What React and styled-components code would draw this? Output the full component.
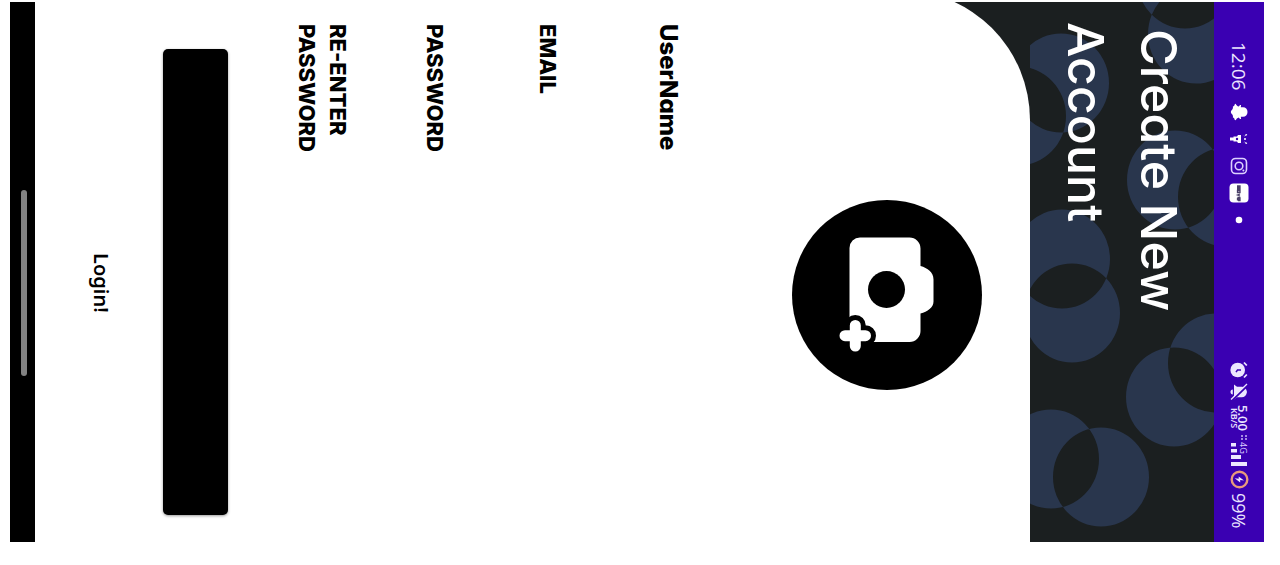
import React from "react";
import styled, { createGlobalStyle } from "styled-components";

const GlobalStyle = createGlobalStyle`
  * { box-sizing: border-box; }
  body { margin: 0; background: #fff; font-family: Inter, "Liberation Sans", sans-serif; }
  button, input { font: inherit; border: 0; padding: 0; }
`;

/* The phone lies on its side: the block axis runs from right to left. */
const Page = styled.div`
  writing-mode: vertical-rl;
  width: 100%;
  height: 100vh;
  min-height: 540px;
  padding-block: 16px 10px;
  padding-inline: 2px 23px;
  background: #fff;
`;

const Screen = styled.div`
  display: flex;
  flex-direction: column;
  width: 100%;
  height: 100%;
  overflow: hidden;
  background: #1b1f20;
`;

const StatusBar = styled.div`
  display: flex;
  flex: none;
  justify-content: space-between;
  align-items: center;
  block-size: 50px;
  padding-inline: 40px 14px;
  background: #3a00b2;
  color: #ece6ff;
  font-family: "Open Sans", sans-serif;
`;

const StatusGroup = styled.div`
  display: flex;
  align-items: center;
  gap: ${(p) => p.$gap}px;
`;

const StatusText = styled.span`
  min-inline-size: ${(p) => p.$min || 0}px;
  font-size: ${(p) => p.$size}px;
  line-height: 24px;
  font-weight: 500;
`;

const Speed = styled.span`
  display: flex;
  flex-direction: column;
  align-items: center;
  font-size: 13px;
  line-height: 10px;
  font-weight: 600;
`;

const SpeedUnit = styled.span`
  font-size: 9px;
  line-height: 8px;
`;

const Upright = styled.svg`
  display: block;
  flex: none;
  overflow: visible;
  writing-mode: horizontal-tb;
`;

const Header = styled.header`
  position: relative;
  flex: none;
  padding-block: 19px;
  padding-inline-start: 20px;
`;

const Pattern = styled.svg`
  position: absolute;
  inset: 0;
  width: 100%;
  height: 100%;
`;

const Title = styled.h1`
  position: relative;
  margin: 0;
  max-inline-size: 320px;
  color: #fff;
  font-size: 50px;
  line-height: 73px;
  font-weight: 500;
  text-indent: 7px;
  font-feature-settings: "cv11";
`;

const Sheet = styled.main`
  flex: 1;
  margin-inline-start: -12px;
  padding-inline: 34px 0;
  padding-block-start: 48px;
  border-start-start-radius: 130px;
  background: #fff;
  color: #000;
`;

const Form = styled.form`
  display: flex;
  flex-direction: column;
  align-items: stretch;
  height: 100%;
`;

const PhotoButton = styled.button`
  align-self: center;
  display: block;
  width: 190px;
  height: 190px;
  margin-inline-start: 24px;
  margin-block-end: 108px;
  border-radius: 50%;
  background: #000;
`;

const Field = styled.div`
  display: flex;
  align-items: stretch;
  margin-block-end: ${(p) => p.$after}px;
`;

const Label = styled.label`
  flex: none;
  inline-size: 148px;
  font-size: ${(p) => p.$size || 22}px;
  line-height: 31px;
  font-weight: 800;
  font-feature-settings: "cv11";
`;

const Input = styled.input`
  flex: 1;
  min-inline-size: 0;
  background: transparent;
  outline: none;
  font-size: 22px;
`;

const Submit = styled.button`
  flex: none;
  block-size: 65px;
  margin-inline: 25px 27px;
  border-radius: 5px;
  background: #000;
  box-shadow: 0 1px 3px rgba(0, 0, 0, 0.4);
`;

const LoginLink = styled.a`
  align-self: center;
  margin-block-start: 47px;
  color: #000;
  font-family: "Noto Sans", sans-serif;
  font-size: 20px;
  line-height: 30px;
  font-weight: 600;
  text-decoration: none;
`;

const NavBar = styled.nav`
  display: flex;
  flex: none;
  justify-content: center;
  align-items: center;
  block-size: 25px;
  padding-inline-start: 22px;
  padding-block-end: 3px;
  background: #000;
`;

const NavHandle = styled.span`
  block-size: 6px;
  inline-size: 186px;
  border-radius: 3px;
  background: #828282;
`;

/* Draws an upright w by h glyph turned a quarter clockwise. */
function Glyph({ w = 18, h = 18, children }) {
  return (
    <Upright width={h} height={w} viewBox={`0 0 ${h} ${w}`} aria-hidden="true">
      <g transform={`translate(${h} 0) rotate(90)`}>{children}</g>
    </Upright>
  );
}

const Ghost = () => (
  <Glyph>
    <path
      fill="#fff"
      d="M9 0.500c3 0 4.700 1.900 4.700 4.500v2.200l2-.3c.6.800 0 1.600-1.300 2.200.5 1.700 1.400 2.600 2.900 3.200-.3 1.100-1.400 1.400-2.400 1.600l-.4 1.200c-1.500-.2-2.300 0-3.200.8-.7.700-1.300 1.200-2.300 1.200s-1.600-.5-2.300-1.200c-.9-.8-1.700-1-3.200-.8l-.4-1.200c-1-.2-2.100-.5-2.400-1.600 1.500-.6 2.400-1.500 2.900-3.200C2.300 8.500 1.700 7.700 2.300 6.900l2 .3V5C4.300 2.400 6 .5 9 .5z"
    />
  </Glyph>
);

const Beacon = () => (
  <Glyph>
    <path fill="#fff" d="M5 7h8v3l-1.500 1v3.500h-1V18h-3v-3.500h-1V11L5 10z" />
    <path stroke="#fff" strokeWidth="1.300" strokeDasharray="2 1" fill="none" d="M9 2v3M4.500 1l1.500 3M13.500 1L12 4" />
    <circle cx="9" cy="11" r="1.200" fill="#3a00b2" />
  </Glyph>
);

const Insta = () => (
  <Glyph>
    <g fill="none" stroke="#ddd0ff" strokeWidth="1.600">
      <rect x="1.500" y="1.500" width="15" height="15" rx="4" />
      <circle cx="9" cy="9" r="3.800" />
    </g>
    <circle cx="13.400" cy="4.600" r="1" fill="#ddd0ff" />
  </Glyph>
);

const MovieTile = () => (
  <Glyph>
    <rect x="-0.500" y="-0.500" width="19" height="19" rx="4" fill="#fff" />
    <path
      stroke="#4a4068"
      strokeWidth="1.300"
      fill="none"
      d="M2 11V8h3v3M3.500 8v3M6.500 8h2v2.500h-2zM10 8l1 2.500L12 8M13.300 7.500v3M16.500 10.500h-2V8h2v1.300h-2"
    />
  </Glyph>
);

const Dot = () => (
  <Glyph>
    <circle cx="9" cy="9" r="3.300" fill="#fff" />
  </Glyph>
);

const Alarm = () => (
  <Glyph>
    <circle cx="9" cy="10.300" r="7.300" fill="#ece6ff" />
    <path stroke="#ece6ff" strokeWidth="1.800" d="M1.500 4l3-2.800M16.500 4l-3-2.800" />
    <path stroke="#3a00b2" strokeWidth="1.500" fill="none" d="M9 7v3.500l2.200 1.500" />
  </Glyph>
);

const BellOff = () => (
  <Glyph>
    <path fill="#ece6ff" d="M9 1c3.500 .5 5.300 2.600 5.300 5.300V11l2.200 3H1.500l2.200-3V6.300C3.700 3.600 5.500 1.500 9 1zM6.500 15.200h5c0 1.500-1 2.300-2.500 2.300s-2.500-.8-2.500-2.300z" />
    <path stroke="#3a00b2" strokeWidth="2" d="M2.500 0.500l15 15.500" />
    <path stroke="#ece6ff" strokeWidth="1.300" d="M1 1l15.500 16" />
  </Glyph>
);

const Signal = () => (
  <Glyph w={31} h={18}>
    <path fill="#ece6ff" d="M8 12h3.500v5H8zM14 11h3.500v6H14zM20 7h4v10h-4zM27 1h4v16h-4z" />
    <path stroke="#c9b8f5" strokeWidth="1.500" strokeDasharray="2 2" d="M1 1v7M4 1v7" />
    <text x="7" y="8" fill="#d9ccff" fontSize="9" fontFamily="Open Sans, sans-serif">4G</text>
  </Glyph>
);

const Charge = () => (
  <Glyph w={19} h={19}>
    <circle cx="9.500" cy="9.500" r="7.800" fill="none" stroke="#e89a7c" strokeWidth="2.400" />
    <path fill="#ece6ff" d="M10.500 5l-4 5.300h2.300l-.6 4 4.200-5.500h-2.500z" />
  </Glyph>
);

const CIRCLES = [
  [[71, 475], [21, 457]],
  [[144, 395], [186, 361]],
  [[42, 311], [32, 257]],
  [[31, 81], [-12, 114]],
  [[145, 178], [196, 195]],
  [[166, 32], [155, -23]],
];

const ellipse = ([x, y]) => `M${x - 48} ${y}a48 49.500 0 1 0 96 0a48 49.500 0 1 0 -96 0z`;

function HeaderPattern() {
  return (
    <Pattern viewBox="0 0 184 540" preserveAspectRatio="xMaxYMin slice" aria-hidden="true">
      {CIRCLES.map((pair, i) => (
        <path key={i} fill="#29364d" fillRule="evenodd" d={pair.map(ellipse).join("")} />
      ))}
    </Pattern>
  );
}

function CameraIcon() {
  return (
    <svg width="190" height="190" viewBox="0 0 190 190" aria-hidden="true">
      <path
        fill="#fff"
        d="M68 37.500h49.500a11 11 0 0 1 11 11V66c7 2 13 6 13 13.500v22c0 6-6 10-13 12v17.500a11 11 0 0 1-11 11H57.500V48a10.500 10.500 0 0 1 10.500-10.500z"
      />
      <circle cx="94.500" cy="89.500" r="18.500" />
      <path d="M63.300 125.500v22M53 135.700h20.500" stroke="#000" strokeWidth="21" strokeLinecap="round" />
      <path d="M63.300 125.500v20.500M53 135.700h20.500" stroke="#fff" strokeWidth="11" strokeLinecap="round" />
    </svg>
  );
}

const FIELDS = [
  { id: "username", label: "UserName", type: "text", after: 90, size: 24 },
  { id: "email", label: "EMAIL", type: "email", after: 82 },
  { id: "password", label: "PASSWORD", type: "password", after: 66 },
  { id: "confirm", label: "RE-ENTER PASSWORD", type: "password", after: 63 },
];

export default function App() {
  return (
    <>
      <GlobalStyle />
      <Page>
        <Screen>
          <StatusBar>
            <StatusGroup $gap={9}>
              <StatusText $size={19} $min={52}>12:06</StatusText>
              <Ghost />
              <Beacon />
              <Insta />
              <MovieTile />
              <Dot />
            </StatusGroup>
            <StatusGroup $gap={4}>
              <Alarm />
              <BellOff />
              <Speed>
                5.00
                <SpeedUnit>KB/S</SpeedUnit>
              </Speed>
              <Signal />
              <Charge />
              <StatusText $size={18}>99%</StatusText>
            </StatusGroup>
          </StatusBar>
          <Header>
            <HeaderPattern />
            <Title>Create New Account</Title>
          </Header>
          <Sheet>
            <Form onSubmit={(e) => e.preventDefault()}>
              <PhotoButton type="button" aria-label="Add photo">
                <CameraIcon />
              </PhotoButton>
              {FIELDS.map((f) => (
                <Field key={f.id} $after={f.after}>
                  <Label htmlFor={f.id} $size={f.size}>{f.label}</Label>
                  <Input id={f.id} type={f.type} />
                </Field>
              ))}
              <Submit type="submit" aria-label="Create account" />
              <LoginLink href="#login">Login!</LoginLink>
            </Form>
          </Sheet>
          <NavBar>
            <NavHandle />
          </NavBar>
        </Screen>
      </Page>
    </>
  );
}
